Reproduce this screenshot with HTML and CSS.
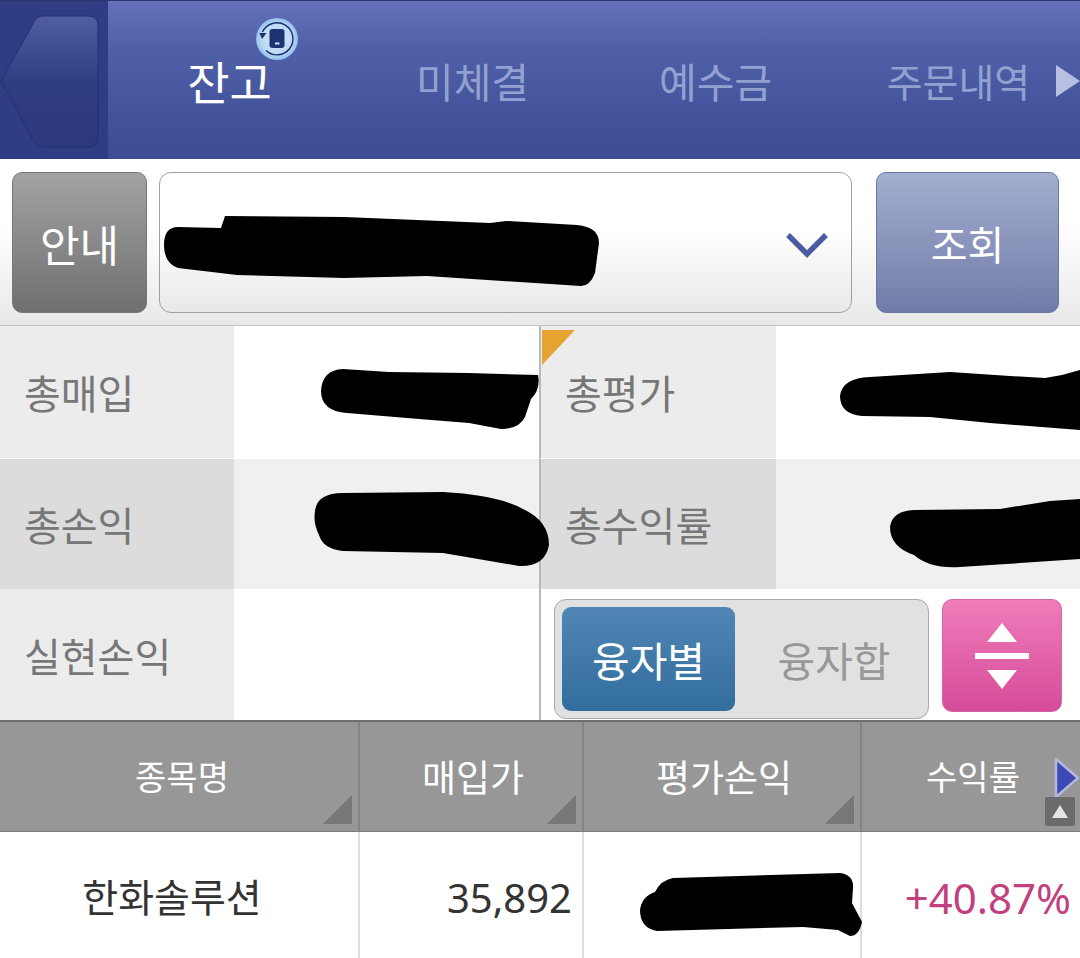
FILE: index.html
```html
<!DOCTYPE html>
<html lang="ko">
<head>
  <meta charset="UTF-8" />
  <title>잔고</title>
  <link rel="stylesheet" href="styles.css">
</head>
<body>
  <header class="topbar">
    <div class="back-area">
      <svg class="back-btn" width="100" height="134" viewBox="0 0 100 134">
        <defs>
          <linearGradient id="backFill" x1="0" y1="0" x2="0" y2="1">
            <stop offset="0" stop-color="#505ea2"/>
            <stop offset="0.5" stop-color="#2f3d82"/>
            <stop offset="1" stop-color="#2c397e"/>
          </linearGradient>
        </defs>
        <path d="M1 66 L34 7 Q37 1 43 1 L88 1 Q98 1 98 11 L98 122 Q98 132 88 132 L43 132 Q37 132 34 127 Z" fill="url(#backFill)" stroke="#24306f" stroke-width="1"/>
      </svg>
    </div>
    <nav class="tabs">
      <div class="tab tab-active">잔고
        <svg class="sync-badge" width="44" height="44" viewBox="0 0 44 44">
          <defs>
            <radialGradient id="badgeFill">
              <stop offset="0" stop-color="#d3e6f8"/>
              <stop offset="0.75" stop-color="#bcd9f4"/>
              <stop offset="1" stop-color="#8fbfec"/>
            </radialGradient>
          </defs>
          <circle cx="22" cy="22" r="21" fill="url(#badgeFill)"/>
          <path d="M7.5 15 A16 16 0 1 1 11 33.5" fill="none" stroke="#1d2f6f" stroke-width="1.4"/>
          <path d="M4.5 16 L11.5 16 L7 22 Z" fill="#1d2f6f"/>
          <rect x="14.5" y="12" width="15" height="19" rx="3" fill="#1f3273"/>
          <rect x="20" y="25.5" width="4.5" height="2" fill="#cfe3f7"/>
        </svg>
      </div>
      <div class="tab">미체결</div>
      <div class="tab">예수금</div>
      <div class="tab tab-long">주문내역</div>
    </nav>
    <div class="more-arrow"></div>
  </header>

  <section class="toolbar">
    <button class="btn btn-info">안내</button>
    <div class="account-select">
      <svg class="scribble scribble-account" width="440" height="76" viewBox="0 0 440 76">
        <path d="M4 32 Q4 14 18 14 L61 15 L65 3 L184 4 L330 10 L346 8 L417 12 Q439 14 439 30 L435 60 Q430 73 421 73 L267 63 L184 65 L77 62 L18 55 Q4 50 4 32 Z" fill="#000"/>
      </svg>
      <svg class="chevron" width="44" height="26" viewBox="0 0 44 26">
        <path d="M3 3 L22 22 L41 3" fill="none" stroke="#4a5ca0" stroke-width="5.5"/>
      </svg>
    </div>
    <button class="btn btn-search">조회</button>
  </section>

  <section class="summary">
    <div class="cell label">총매입</div>
    <div class="cell value">
      <svg class="scribble" style="left:85px;top:41px" width="222" height="64" viewBox="0 0 222 64">
        <path d="M2 24 Q3 3 24 2 L70 5 L150 6 L219 8 Q222 22 212 32 L206 50 Q200 62 182 62 L150 56 L100 52 L28 46 Q2 44 2 24 Z" fill="#000"/>
      </svg>
    </div>
    <div class="cell label label-split">
      <span class="corner-mark"></span>총평가
    </div>
    <div class="cell value">
      <svg class="scribble" style="left:64px;top:44px" width="240" height="62" viewBox="0 0 240 62">
        <path d="M0 26 Q2 8 30 7 L110 2 L170 6 L205 8 L222 5 L240 0 L240 60 L150 53 L90 47 L22 46 Q0 44 0 26 Z" fill="#000"/>
      </svg>
    </div>
    <div class="cell label label-dark">총손익</div>
    <div class="cell value value-grey">
      <svg class="scribble scribble-over" style="left:79px;top:32px" width="238" height="76" viewBox="0 0 238 76">
        <path d="M2 20 Q4 2 30 2 L130 1 Q185 4 210 18 Q236 30 236 54 Q232 76 206 75 L130 62 L30 60 Q10 58 6 44 Q0 32 2 20 Z" fill="#000"/>
      </svg>
    </div>
    <div class="cell label label-dark label-split">총수익률</div>
    <div class="cell value value-grey">
      <svg class="scribble" style="left:114px;top:38px" width="190" height="72" viewBox="0 0 190 72">
        <path d="M0 30 Q2 14 24 13 L110 12 L160 4 L190 2 L190 62 L130 66 L70 70 Q40 72 24 58 Q0 50 0 30 Z" fill="#000"/>
      </svg>
    </div>
    <div class="cell label">실현손익</div>
    <div class="cell value"></div>
    <div class="actions">
      <div class="segment">
        <div class="segment-item segment-on">융자별</div>
        <div class="segment-item">융자합</div>
      </div>
      <button class="sort-btn">
        <span class="tri-up"></span>
        <span class="sort-line"></span>
        <span class="tri-down"></span>
      </button>
    </div>
  </section>

  <section class="stock-table">
    <div class="th th-first">종목명<span class="sort-corner"></span></div>
    <div class="th th-wide">매입가<span class="sort-corner"></span></div>
    <div class="th th-wide">평가손익<span class="sort-corner"></span></div>
    <div class="th th-last">수익률
      <svg class="next-arrow" width="26" height="42" viewBox="0 0 26 42">
        <path d="M2 2 L24 21 L2 40 Z" fill="#3f49b5" stroke="#b4b8dc" stroke-width="2.5" stroke-linejoin="round"/>
      </svg>
      <span class="scroll-top"></span>
    </div>
    <div class="td td-name">한화솔루션</div>
    <div class="td td-num">35,892</div>
    <div class="td">
      <svg class="scribble" style="left:55px;top:40px" width="226" height="66" viewBox="0 0 226 66">
        <path d="M1 38 Q3 24 16 20 Q22 8 34 6 L201 1 Q215 3 214 16 L213 31 L223 50 Q220 64 211 64 L199 58 L164 55 L18 59 Q1 56 1 38 Z" fill="#000"/>
      </svg>
    </div>
    <div class="td td-rate">+40.87%</div>
  </section>
</body>
</html>
```

FILE: styles.css
```css
* {
  box-sizing: border-box;
}
body {
  margin: 0;
  width: 1080px;
  height: 958px;
  overflow: hidden;
  background: #fff;
  font-family: "Noto Sans CJK KR", "Noto Sans", sans-serif;
}
.scribble {
  position: absolute;
}
.scribble-over {
  z-index: 2;
}

/* top tabs */
.topbar {
  display: flex;
  height: 159px;
  background: linear-gradient(to bottom, #6371b9, #4f60a9 30%, #3c4b92);
  border-top: 1px solid #2a3570;
  position: relative;
}
.back-area {
  width: 108px;
  background: #2f3e84;
  padding: 14px 0 0 0;
}
.tabs {
  display: flex;
}
.tab {
  position: relative;
  width: 243px;
  display: flex;
  align-items: center;
  justify-content: center;
  font-size: 41px;
  color: #93a1d1;
}
.tab-long {
  font-size: 39px;
}
.tab-active {
  color: #fff;
  font-size: 46px;
}
.sync-badge {
  position: absolute;
  left: 147px;
  top: 16px;
}
.more-arrow {
  position: absolute;
  left: 1056px;
  top: 64px;
  width: 0;
  height: 0;
  border-left: 24px solid #b7c0e2;
  border-top: 16px solid transparent;
  border-bottom: 16px solid transparent;
}

/* account row */
.toolbar {
  display: flex;
  height: 167px;
  padding: 13px 21px 12px 12px;
  gap: 12px;
  background: linear-gradient(to bottom, #fff, #fff 40%, #e8e8e8);
  border-bottom: 1px solid #c4c4c4;
}
.btn {
  font-family: inherit;
  color: #fff;
  border-radius: 10px;
  font-size: 43px;
  padding: 0;
}
.btn-info {
  width: 135px;
  background: linear-gradient(to bottom, #a3a3a3, #6f6f6f);
  border: 1px solid #777;
}
.btn-search {
  width: 183px;
  margin-left: 12px;
  background: linear-gradient(to bottom, #a4aed0, #717ba8);
  border: 1px solid #6c76a3;
  font-size: 40px;
}
.account-select {
  position: relative;
  flex: 1;
  border: 1px solid #a0a0a0;
  border-radius: 12px;
  background: linear-gradient(to bottom, #fff, #fff 40%, #e8e8e8);
}
.scribble-account {
  left: 0;
  top: 40px;
}
.chevron {
  position: absolute;
  right: 22px;
  top: 59px;
}

/* summary grid */
.summary {
  display: grid;
  grid-template-columns: 234px 305px 237px 304px;
  grid-template-rows: 133px 130px 131px;
  border-bottom: 2px solid #6f6f6f;
  background: #fff;
}
.cell {
  position: relative;
}
.cell:nth-child(-n+4) {
  border-bottom: 1px solid #fff;
}
.label {
  display: flex;
  align-items: center;
  padding-left: 24px;
  font-size: 40px;
  color: #777;
  background: #ececec;
}
.label-dark {
  background: #dcdcdc;
}
.label-split {
  border-left: 2px solid #b9b9b9;
}
.value {
  background: #fff;
}
.value-grey {
  background: #f0f0f0;
}
.corner-mark {
  position: absolute;
  left: 1px;
  top: 4px;
  width: 33px;
  height: 35px;
  background: #e6a32f;
  clip-path: polygon(0 0, 100% 0, 0 100%);
}
.actions {
  grid-column: 3 / 5;
  display: flex;
  gap: 13px;
  padding: 10px 18px 0 13px;
  border-left: 2px solid #b9b9b9;
}
.segment {
  display: flex;
  width: 375px;
  height: 120px;
  padding: 7px;
  background: #e1e1e1;
  border: 1px solid #a8a8a8;
  border-radius: 12px;
}
.segment-item {
  flex: 1;
  display: flex;
  align-items: center;
  justify-content: center;
  font-size: 41px;
  color: #989898;
  height: 104px;
}
.segment-on {
  color: #fff;
  flex: 0 0 173px;
  border-radius: 9px;
  background: linear-gradient(to bottom, #5186b5, #316d9d);
}
.segment-on + .segment-item {
  padding-left: 12px;
}
.sort-btn {
  width: 120px;
  height: 113px;
  display: flex;
  flex-direction: column;
  align-items: center;
  justify-content: center;
  gap: 11px;
  padding: 0;
  border: 1px solid #d266a6;
  border-radius: 10px;
  background: linear-gradient(to bottom, #f07cbb, #d54b98);
}
.tri-up, .tri-down {
  width: 0;
  height: 0;
  border-left: 15px solid transparent;
  border-right: 15px solid transparent;
}
.tri-up {
  border-bottom: 19px solid #fff;
}
.tri-down {
  border-top: 19px solid #fff;
}
.sort-line {
  width: 54px;
  height: 6px;
  background: #fff;
}

/* stock table */
.stock-table {
  display: grid;
  grid-template-columns: 360px 224px 278px 218px;
  grid-template-rows: 110px 126px;
}
.th {
  position: relative;
  display: flex;
  align-items: center;
  justify-content: center;
  padding-bottom: 2px;
  font-size: 34px;
  color: #fff;
  background: #979797;
  border-right: 2px solid #848484;
  border-bottom: 1px solid #7c7c7c;
}
.th-first {
  padding-left: 6px;
}
.th-wide {
  font-size: 37px;
  padding-left: 4px;
}
.th-last {
  border-right: 0;
  padding-left: 4px;
}
.sort-corner {
  position: absolute;
  right: 6px;
  bottom: 7px;
  width: 29px;
  height: 29px;
  background: #777;
  clip-path: polygon(100% 0, 100% 100%, 0 100%);
}
.next-arrow {
  position: absolute;
  right: 0;
  top: 35px;
}
.scroll-top {
  position: absolute;
  right: 5px;
  top: 75px;
  width: 30px;
  height: 29px;
  background: #6b6b6b;
  border-radius: 2px;
}
.scroll-top::after {
  content: "";
  position: absolute;
  left: 7px;
  top: 8px;
  border-left: 8px solid transparent;
  border-right: 8px solid transparent;
  border-bottom: 13px solid #e4e4e4;
}
.td {
  position: relative;
  display: flex;
  align-items: center;
  justify-content: center;
  font-size: 40px;
  color: #333;
  border-right: 2px solid #dcdcdc;
  background: #fff;
}
.td-name {
  font-size: 39px;
  padding-right: 14px;
}
.td-num {
  justify-content: flex-end;
  padding-right: 10px;
  padding-top: 5px;
  font-family: "Noto Sans", sans-serif;
}
.td-rate {
  justify-content: flex-end;
  padding-right: 9px;
  padding-top: 5px;
  border-right: 0;
  color: #c23f80;
  font-size: 42px;
  font-family: "Noto Sans", sans-serif;
}
```
